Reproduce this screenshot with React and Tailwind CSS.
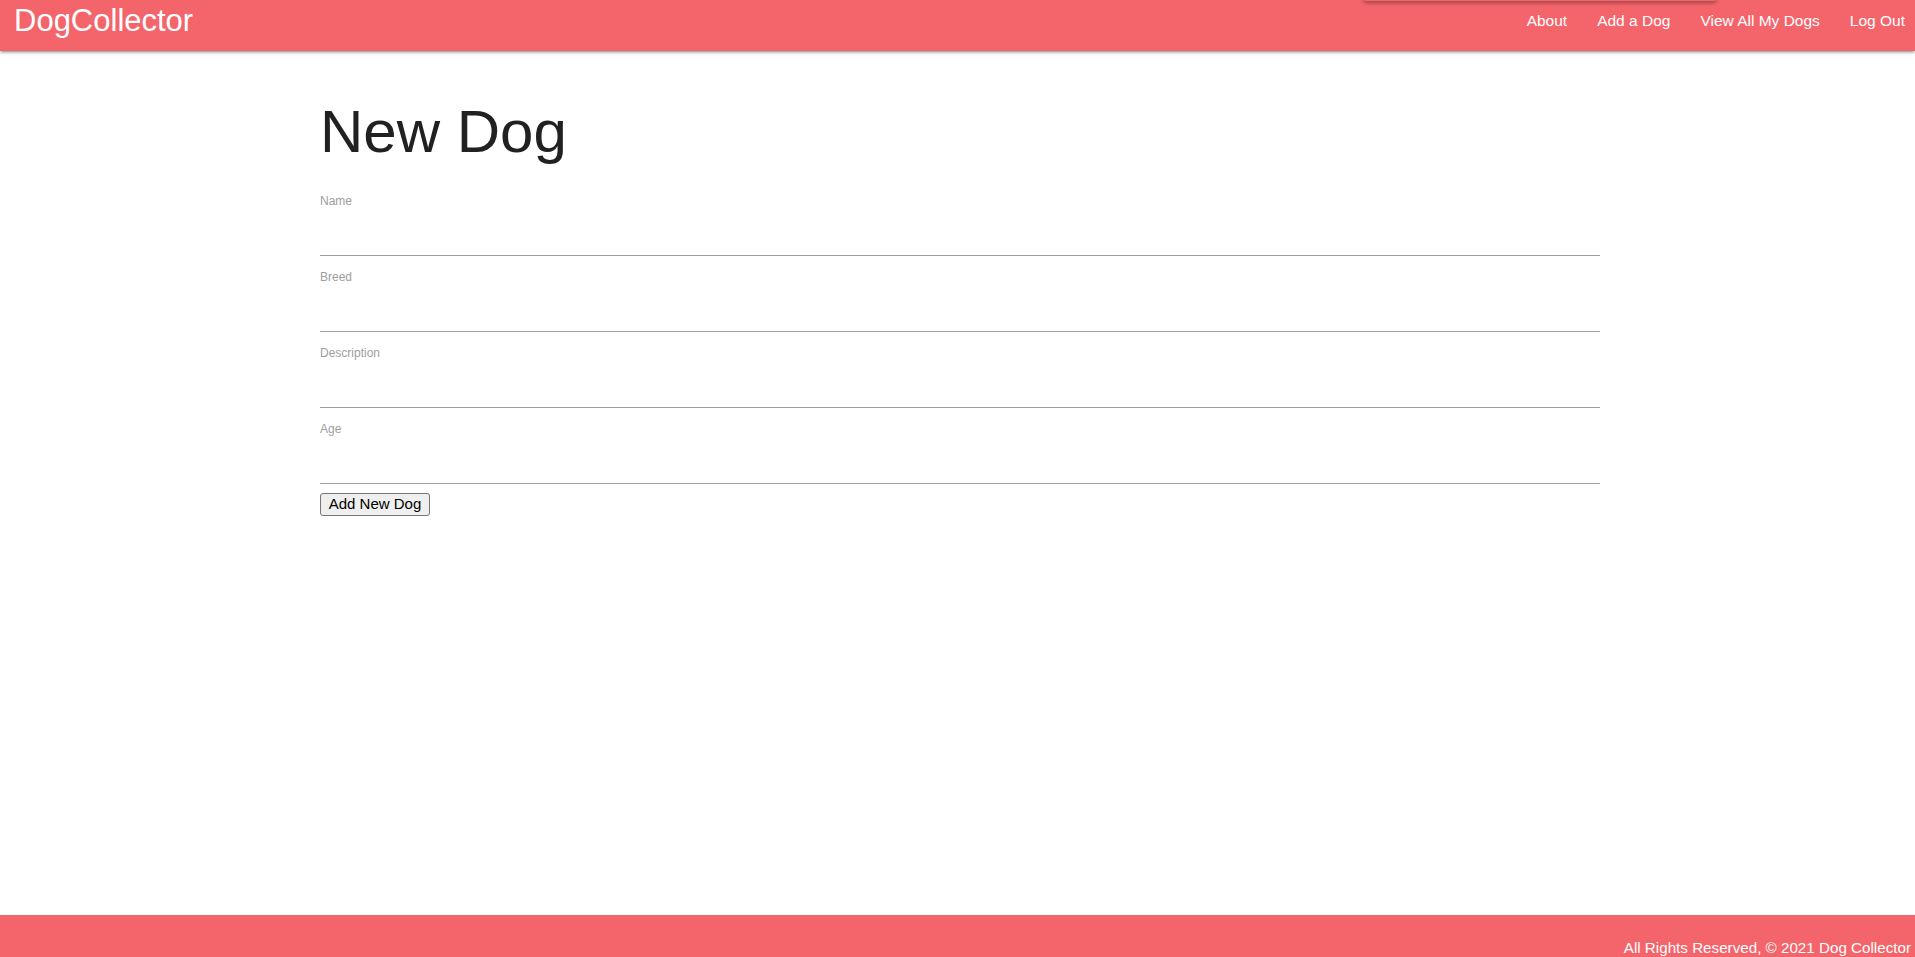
import React from "react";

const fields = ["Name", "Breed", "Description", "Age"];

export default function App() {
  return (
    <div
      className="relative flex h-[957px] flex-col overflow-hidden bg-white"
      style={{ fontFamily: '"Liberation Sans", Arial, sans-serif' }}
    >
      <nav className="relative z-10 flex h-[51px] items-start bg-[#f4656b] text-white shadow-[0_2px_2px_0_rgba(0,0,0,0.14),0_3px_1px_-2px_rgba(0,0,0,0.12),0_1px_5px_0_rgba(0,0,0,0.2)]">
        <a className="pl-[14px] text-[31px] leading-[42px]">DogCollector</a>
        <ul className="ml-auto flex gap-[30px] pr-[10px] text-[15.5px] leading-[42px]">
          <li>About</li>
          <li>Add a Dog</li>
          <li>View All My Dogs</li>
          <li>Log Out</li>
        </ul>
        <div className="absolute left-[1364px] top-[-6px] h-[7px] w-[352px] rounded-b-[2px] bg-[#f4656b] shadow-[0_2px_4px_0_rgba(0,0,0,0.35)]" />
      </nav>

      <main className="flex-1 pl-[5px]">
        <div className="mx-auto w-[1280px]">
          <h1 className="mt-[50px] text-[60px] leading-[61px] text-[#212121]">New Dog</h1>
          <form className="mt-[32px] flex flex-col">
            {fields.map((f, i) => (
              <div key={f} className={i === 0 ? "" : "mt-[14px]"}>
                <label className="block text-[12px] leading-[14px] text-[#9e9e9e]">{f}</label>
                <div className="h-[48px] border-b border-[#9e9e9e]" />
              </div>
            ))}
            <div className="mt-[8px]">
              <button
                type="button"
                className="h-[23px] w-[110px] rounded-[3px] border border-[#767676] bg-[#efefef] text-[15px] leading-[20px] text-black"
              >
                Add New Dog
              </button>
            </div>
          </form>
        </div>
      </main>

      <footer className="h-[42px] overflow-hidden bg-[#f4656b] text-white">
        <div className="pr-[4px] pt-[18px] text-right text-[15.2px] leading-[30px]">
          All Rights Reserved, © 2021 Dog Collector
        </div>
      </footer>
    </div>
  );
}
